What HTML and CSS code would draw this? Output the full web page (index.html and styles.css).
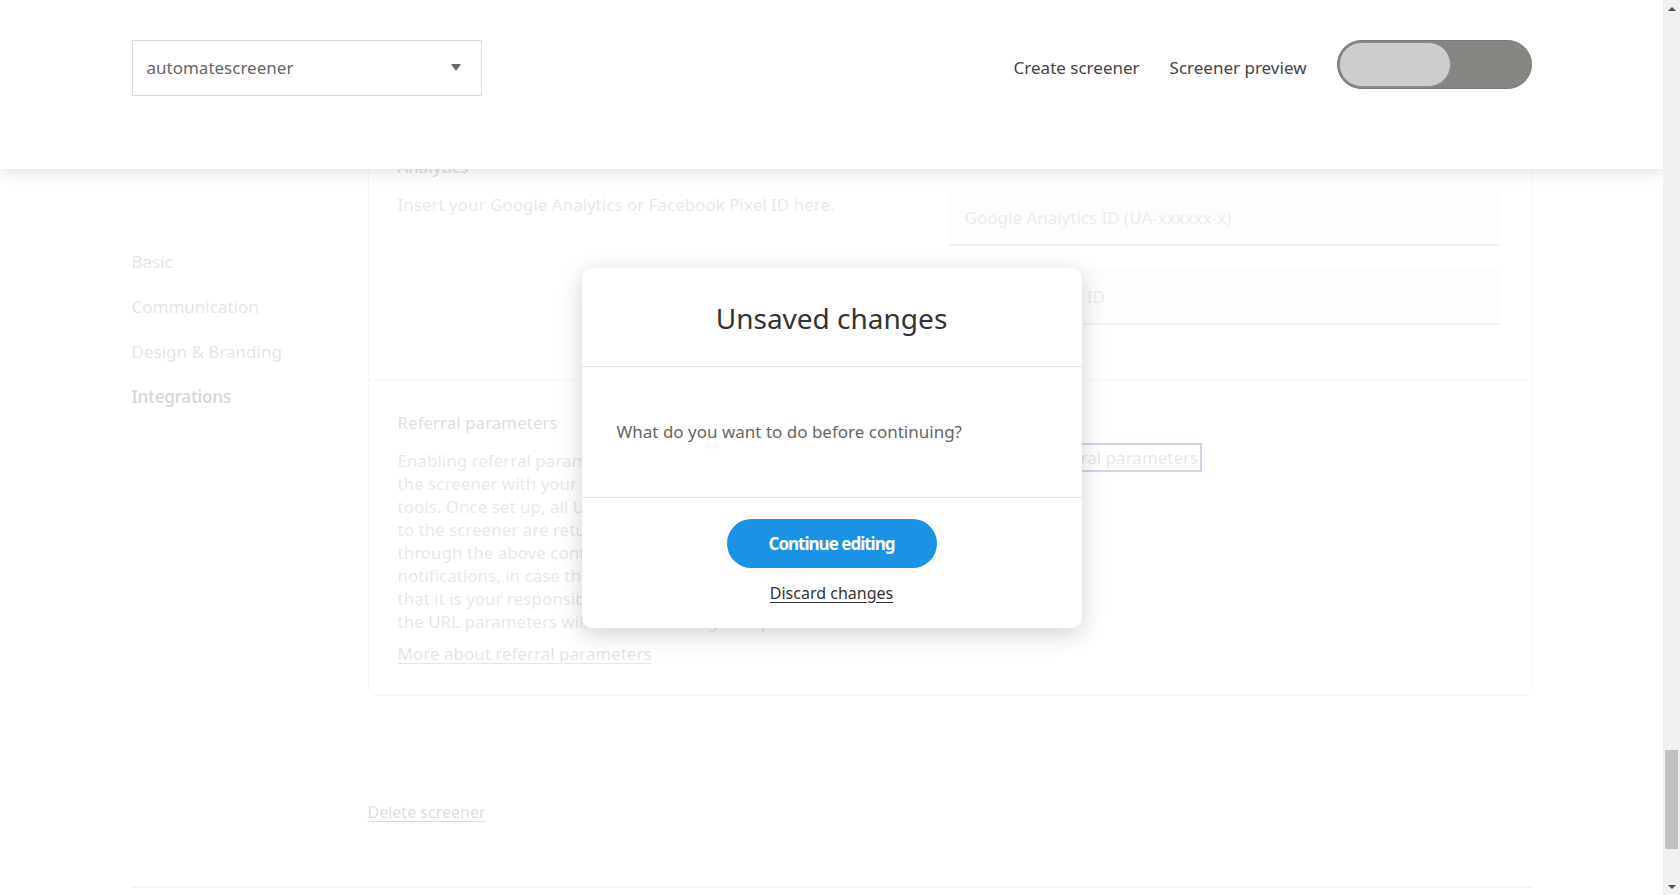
FILE: index.html
```html
<!DOCTYPE html>
<html lang="en">
<head>
<meta charset="utf-8">
<title>Screener settings</title>
<link rel="stylesheet" href="styles.css">
</head>
<body>
<div class="app">
  <div class="viewport">
    <header class="topbar">
      <div class="container topbar-inner">
        <div class="select">
          <span class="select-value">automatescreener</span>
          <span class="caret"></span>
        </div>
        <nav class="topnav">
          <a class="topnav-link" href="#">Create screener</a>
          <a class="topnav-link" href="#">Screener preview</a>
          <div class="toggle"><span class="toggle-knob"></span></div>
        </nav>
      </div>
    </header>

    <main class="container page">
      <aside class="sidenav">
        <a class="sidenav-link" href="#">Basic</a>
        <a class="sidenav-link" href="#">Communication</a>
        <a class="sidenav-link" href="#">Design &amp; Branding</a>
        <a class="sidenav-link is-active" href="#">Integrations</a>
      </aside>

      <div class="content">
        <div class="card">
          <section class="card-section section-analytics">
            <div class="section-info">
              <div class="section-label">Analytics</div>
              <p class="section-desc">Insert your Google Analytics or Facebook Pixel ID here.</p>
            </div>
            <div class="section-fields">
              <input class="field" type="text" placeholder="Google Analytics ID (UA-xxxxxx-x)">
              <input class="field" type="text" placeholder="Facebook Pixel ID">
            </div>
          </section>
          <section class="card-section section-referral">
            <div class="section-info">
              <div class="section-label label-referral">Referral parameters</div>
              <p class="section-desc">Enabling referral parameters allows you to connect<br>the screener with your existing marketing and analytics<br>tools. Once set up, all URL parameters that are passed<br>to the screener are returned to you with every response<br>through the above configured integrations and email<br>notifications, in case they are enabled. Please note<br>that it is your responsibility to ensure the contents of<br>the URL parameters will be stored along with personal data.</p>
              <a class="section-link" href="#">More about referral parameters</a>
            </div>
            <div class="section-fields fields-referral">
              <a class="focus-link" href="#">Configure referral parameters</a>
            </div>
          </section>
        </div>
        <a class="delete-link" href="#">Delete screener</a>
      </div>
    </main>
    <div class="container footer-line"></div>

    <div class="overlay">
      <div class="modal" role="dialog" aria-labelledby="modal-title">
        <div class="modal-head">
          <h2 class="modal-title" id="modal-title">Unsaved changes</h2>
        </div>
        <div class="modal-body">
          <p class="modal-text">What do you want to do before continuing?</p>
        </div>
        <div class="modal-foot">
          <button class="btn-primary" type="button">Continue editing</button>
          <a class="discard-link" href="#">Discard changes</a>
        </div>
      </div>
    </div>
  </div>

  <div class="scrollbar">
    <div class="sb-btn"><span class="sb-arrow-up"></span></div>
    <div class="sb-track"><div class="sb-thumb"></div></div>
    <div class="sb-btn"><span class="sb-arrow-down"></span></div>
  </div>
</div>
</body>
</html>
```

FILE: styles.css
```css
* {
  box-sizing: border-box;
}

html, body {
  margin: 0;
  padding: 0;
  height: 100%;
  overflow: hidden;
}

body {
  font-family: "Noto Sans", "Open Sans", "DejaVu Sans", sans-serif;
  font-size: 17px;
  color: #444;
  background: #fff;
}

a {
  text-decoration: none;
  color: inherit;
}

.app {
  display: flex;
  height: 895px;
}

.viewport {
  flex: 1;
  position: relative;
  overflow: hidden;
  background: #fff;
}

.container {
  width: 1400px;
  margin-left: auto;
  margin-right: auto;
}

/* ---------- Top bar ---------- */
.topbar {
  position: relative;
  z-index: 3;
  height: 169px;
  background: #fff;
  box-shadow: 0 4px 14px rgba(0, 0, 0, 0.11);
}

.topbar-inner {
  display: flex;
  justify-content: space-between;
  align-items: flex-start;
  padding-top: 40px;
}

.select {
  width: 350px;
  height: 56px;
  border: 1px solid #d9d9d9;
  padding: 0 20px 0 14px;
  display: flex;
  align-items: center;
  justify-content: space-between;
  color: #666;
  background: #fff;
}

.select-value {
  line-height: 24px;
}

.caret {
  width: 0;
  height: 0;
  border-left: 5px solid transparent;
  border-right: 5px solid transparent;
  border-top: 7px solid #6a6a6a;
  margin-top: -2px;
}

.topnav {
  display: flex;
  align-items: center;
  height: 56px;
}

.topnav-link {
  color: #444;
  line-height: 24px;
  margin-right: 30px;
}

.toggle {
  align-self: flex-start;
  width: 195px;
  height: 49px;
  border-radius: 25px;
  background: #858582;
  border: 1px solid #7a7a78;
  padding: 1px;
}

.toggle-knob {
  display: block;
  width: 112px;
  height: 45px;
  border-radius: 23px;
  background: #cdcdcd;
  border: 1px solid #8e8e8c;
}

/* ---------- Page ---------- */
.page {
  margin-top: -45px;
  display: grid;
  grid-template-columns: 236px 1fr;
  align-items: start;
}

.sidenav {
  display: flex;
  flex-direction: column;
  gap: 21px;
  padding-top: 126px;
}

.sidenav-link {
  color: #7a7a7a;
  line-height: 24px;
}

.sidenav-link.is-active {
  color: #404040;
  font-weight: 600;
  letter-spacing: -0.3px;
}

.card {
  border: 1px solid #d6d6d6;
  border-radius: 6px;
  background: #fff;
}

.card-section {
  display: grid;
  grid-template-columns: 521px 551px;
  column-gap: 30px;
  align-items: start;
}

.section-analytics {
  padding: 30px 29px 54px;
}

.section-referral {
  border-top: 1px solid #dcdcdc;
  padding: 31px 29px 30px;
}

.section-label {
  color: #555;
  line-height: 24px;
  margin-bottom: 14px;
}

.label-referral {
  margin-bottom: 14px;
}

.section-desc {
  margin: 0;
  color: #888;
  line-height: 23px;
}

.section-link {
  display: inline-block;
  margin-top: 9px;
  color: #777;
  line-height: 23px;
  text-decoration: underline;
  text-underline-offset: 3px;
}

.section-fields {
  display: flex;
  flex-direction: column;
  gap: 23px;
  padding-top: 35px;
}

.fields-referral {
  padding-top: 34px;
  align-items: flex-start;
}

.field {
  width: 100%;
  height: 56px;
  border: 0;
  border-bottom: 2px solid #bdbdbd;
  background: #f6f6f6;
  padding: 0 16px;
  font: inherit;
  color: #555;
  outline: none;
}

.field::placeholder {
  color: #9a9a9a;
}

.focus-link {
  display: inline-block;
  margin-left: 8px;
  color: #888;
  line-height: 25px;
  padding: 0 2px;
  outline: 2px solid rgb(15, 15, 230);
}

.delete-link {
  display: inline-block;
  margin-top: 104px;
  color: #555;
  font-size: 16px;
  line-height: 24px;
  text-decoration: underline;
  text-underline-offset: 3px;
}

.footer-line {
  margin-top: 62px;
  height: 2px;
  background: #cfcfcf;
}

/* ---------- Overlay & modal ---------- */
.overlay {
  position: absolute;
  inset: 0;
  z-index: 2;
  background: rgba(255, 255, 255, 0.8);
  display: flex;
  align-items: center;
  justify-content: center;
}

.modal {
  width: 500px;
  background: #fff;
  border-radius: 10px;
  box-shadow: 0 6px 24px rgba(0, 0, 0, 0.18);
}

.modal-head {
  padding: 31px 20px 29px;
  border-bottom: 1px solid #e2e2e2;
}

.modal-title {
  margin: 0;
  font-size: 28px;
  font-weight: 400;
  line-height: 38px;
  color: #333;
  text-align: center;
}

.modal-body {
  padding: 53px 35px;
}

.modal-text {
  margin: 0;
  line-height: 24px;
  color: #666;
}

.modal-foot {
  border-top: 1px solid #e2e2e2;
  padding: 21px 0 23px;
  display: flex;
  flex-direction: column;
  align-items: center;
  gap: 13px;
}

.btn-primary {
  width: 210px;
  height: 49px;
  border: 0;
  border-radius: 25px;
  background: #1c92e6;
  color: #fff;
  font-family: inherit;
  font-size: 17px;
  font-weight: 700;
  letter-spacing: -1px;
  cursor: pointer;
}

.discard-link {
  color: #333;
  font-size: 16px;
  line-height: 24px;
  text-decoration: underline;
  text-underline-offset: 3px;
}

/* ---------- Scrollbar ---------- */
.scrollbar {
  width: 17px;
  background: #f1f1f1;
  display: flex;
  flex-direction: column;
}

.sb-btn {
  height: 17px;
  display: flex;
  align-items: center;
  justify-content: center;
}

.sb-arrow-up {
  width: 0;
  height: 0;
  border-left: 4px solid transparent;
  border-right: 4px solid transparent;
  border-bottom: 4px solid #505050;
}

.sb-arrow-down {
  width: 0;
  height: 0;
  border-left: 4px solid transparent;
  border-right: 4px solid transparent;
  border-top: 4px solid #505050;
}

.sb-track {
  flex: 1;
  padding: 0 2px;
}

.sb-thumb {
  margin-top: 733px;
  height: 99px;
  background: #c1c1c1;
}
```
